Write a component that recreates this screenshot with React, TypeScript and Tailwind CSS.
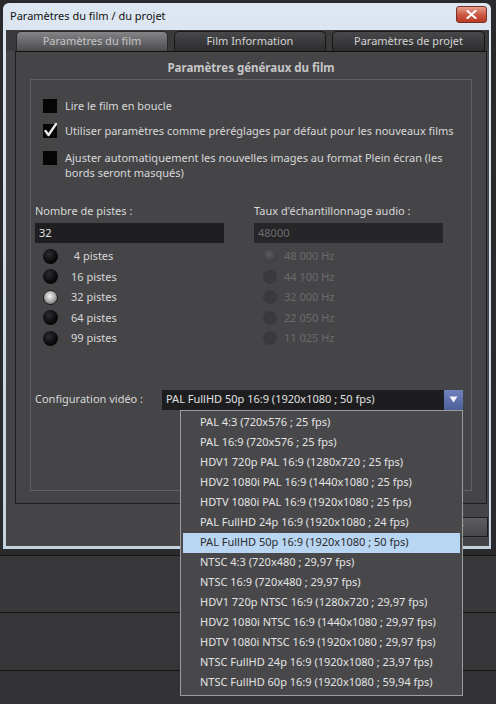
import React from "react";

const presets = [
  "PAL 4:3 (720x576 ; 25 fps)",
  "PAL 16:9 (720x576 ; 25 fps)",
  "HDV1 720p PAL 16:9 (1280x720 ; 25 fps)",
  "HDV2 1080i PAL 16:9 (1440x1080 ; 25 fps)",
  "HDTV 1080i PAL 16:9 (1920x1080 ; 25 fps)",
  "PAL FullHD 24p 16:9 (1920x1080 ; 24 fps)",
  "PAL FullHD 50p 16:9 (1920x1080 ; 50 fps)",
  "NTSC 4:3 (720x480 ; 29,97 fps)",
  "NTSC 16:9 (720x480 ; 29,97 fps)",
  "HDV1 720p NTSC 16:9 (1280x720 ; 29,97 fps)",
  "HDV2 1080i NTSC 16:9 (1440x1080 ; 29,97 fps)",
  "HDTV 1080i NTSC 16:9 (1920x1080 ; 29,97 fps)",
  "NTSC FullHD 24p 16:9 (1920x1080 ; 23,97 fps)",
  "NTSC FullHD 60p 16:9 (1920x1080 ; 59,94 fps)",
];

const tracks = [" 4 pistes", "16 pistes", "32 pistes", "64 pistes", "99 pistes"];
const rates = ["48 000 Hz", "44 100 Hz", "32 000 Hz", "22 050 Hz", "11 025 Hz"];

function CheckBox({ checked }: { checked?: boolean }) {
  return (
    <div className="relative mt-[1px] h-[14px] w-[14px] shrink-0 bg-[#050506]">
      {checked && (
        <svg className="absolute -top-[2px] left-0" width="15" height="16" viewBox="0 0 15 16">
          <path d="M2.5 9 L5.5 13 L13 2" fill="none" stroke="#e8e8e8" strokeWidth="2.4" strokeLinecap="round" strokeLinejoin="round" />
        </svg>
      )}
    </div>
  );
}

export default function App() {
  return (
    <div className="relative h-[704px] w-[496px] overflow-hidden font-['Noto_Sans',sans-serif] text-[11px]">
      {/* app behind the dialog */}
      <div className="flex h-full flex-col">
        <div className="h-[555px] bg-[#2a2a2c]" />
        <div className="h-[1px] bg-[#141415]" />
        <div className="h-[56px] bg-[#38383b]" />
        <div className="h-[1px] bg-[#141415]" />
        <div className="h-[57px] bg-[#363639]" />
        <div className="h-[1px] bg-[#141415]" />
        <div className="flex-1 bg-[#333336]" />
      </div>

      {/* dialog window */}
      <div className="absolute left-[3px] top-[3px] flex h-[546px] w-[488px] flex-col rounded-t-[6px] bg-gradient-to-b from-[#dde7f1] to-[#c3d2e1] pb-[3px] pl-[3px] pr-[2px]">
        {/* title bar */}
        <div className="flex h-[27px] shrink-0 items-center justify-between pl-[4px] pr-[2px]">
          <span className="text-[11px] text-[#111]">Paramètres du film / du projet</span>
          <div className="mt-[-4px] flex h-[17px] w-[31px] items-center justify-center rounded-[3px] border border-[#7a3024] bg-gradient-to-b from-[#e6a090] via-[#cc5a44] to-[#b83a26]">
            <svg width="11" height="9" viewBox="0 0 11 9">
              <path d="M1.5 1 L9.5 8 M9.5 1 L1.5 8" stroke="#fff" strokeWidth="2.2" strokeLinecap="round" />
            </svg>
          </div>
        </div>

        {/* body */}
        <div className="flex flex-1 flex-col bg-[#454548]">
          {/* tabs */}
          <div className="flex h-[21px] shrink-0 items-end gap-[6px] bg-[#3a3a3d] pl-[10px]">
            <div className="flex h-[20px] w-[152px] items-center justify-center rounded-t-[5px] border border-b-0 border-[#2a2a2c] bg-gradient-to-b from-[#858588] to-[#4c4c4f] text-[#c4c4c4]">
              Paramètres du film
            </div>
            <div className="flex h-[20px] w-[152px] items-center justify-center rounded-t-[5px] border border-b-0 border-[#161617] bg-gradient-to-b from-[#48484b] to-[#2c2c2e] text-[#d2d2d2]">
              Film Information
            </div>
            <div className="flex h-[20px] w-[153px] items-center justify-center rounded-t-[5px] border border-b-0 border-[#161617] bg-gradient-to-b from-[#48484b] to-[#2c2c2e] text-[#d2d2d2]">
              Paramètres de projet
            </div>
          </div>

          {/* tab panel */}
          <div className="ml-[9px] flex h-[453px] w-[472px] flex-col border border-[#1e1e20] border-t-[#111] bg-[#454548]">
            <div className="mt-[8px] text-center text-[11.5px] font-bold leading-[16px] text-[#c6c6c6]">
              Paramètres généraux du film
            </div>

            {/* group box */}
            <div className="mx-[14px] mt-[3px] flex h-[412px] flex-col border border-[#606063] text-[#d8d8d8]">
              <div className="flex flex-col pl-[12px]">
                <div className="mt-[18px] flex items-start gap-[8px] leading-[15px]">
                  <CheckBox />
                  <span>Lire le film en boucle</span>
                </div>
                <div className="mt-[10px] flex items-start gap-[8px] leading-[15px]">
                  <CheckBox checked />
                  <span className="whitespace-nowrap">Utiliser paramètres comme préréglages par défaut pour les nouveaux films</span>
                </div>
                <div className="mt-[12px] flex items-start gap-[8px] leading-[15px]">
                  <CheckBox />
                  <span className="whitespace-nowrap">
                    Ajuster automatiquement les nouvelles images au format Plein écran (les
                    <br />
                    bords seront masqués)
                  </span>
                </div>
              </div>

              <div className="mt-[23px] grid grid-cols-[189px_189px] gap-x-[30px] pl-[4px]">
                <div className="flex flex-col">
                  <span className="leading-[15px]">Nombre de pistes :</span>
                  <div className="mt-[5px] flex h-[20px] items-center bg-[#1f1f21] pl-[4px] text-[#e2e2e2]">32</div>
                  <div className="mt-[3px] flex flex-col">
                    {tracks.map((t, i) => (
                      <div key={t} className="flex h-[20.5px] items-center gap-[13px] pl-[8px]">
                        {i === 2 ? (
                          <div className="h-[15px] w-[15px] rounded-full border border-[#1a1a1a] bg-[radial-gradient(circle_at_45%_40%,#f4f4f4,#a8a8a8_50%,#4a4a4a)]" />
                        ) : (
                          <div className="h-[15px] w-[15px] rounded-full bg-[radial-gradient(circle_at_40%_35%,#2c2c31,#040405_70%)]" />
                        )}
                        <span className="whitespace-pre">{t}</span>
                      </div>
                    ))}
                  </div>
                </div>
                <div className="flex flex-col">
                  <span className="leading-[15px]">Taux d'échantillonnage audio :</span>
                  <div className="mt-[5px] flex h-[20px] items-center bg-[#262628] pl-[4px] text-[#6e6e70]">48000</div>
                  <div className="mt-[3px] flex flex-col text-[#6a6a6c]">
                    {rates.map((r, i) => (
                      <div key={r} className="flex h-[20.5px] items-center gap-[7px] pl-[9px]">
                        <div
                          className={
                            i === 0
                              ? "h-[14px] w-[14px] rounded-full bg-[radial-gradient(circle_at_45%_40%,#5c5c60,#3c3c3f_70%)]"
                              : "h-[14px] w-[14px] rounded-full bg-[#3a3a3d]"
                          }
                        />
                        <span>{r}</span>
                      </div>
                    ))}
                  </div>
                </div>
              </div>

              {/* video configuration */}
              <div className="mt-[41px] flex items-center pl-[4px]">
                <span className="w-[127px]">Configuration vidéo :</span>
                <div className="relative flex h-[20px] w-[301px] items-center bg-[#1d1d1f]">
                  <span className="flex-1 pl-[4px] text-[#e0e0e0]">PAL FullHD 50p 16:9 (1920x1080 ; 50 fps)</span>
                  <div className="flex h-[20px] w-[19px] items-center justify-center bg-gradient-to-b from-[#7083bd] to-[#4d5f98]">
                    <svg width="9" height="7" viewBox="0 0 9 7">
                      <path d="M0.5 0.5 L8.5 0.5 L4.5 6.5 Z" fill="#f4f4f8" />
                    </svg>
                  </div>

                  {/* open list */}
                  <div className="absolute left-[18px] top-full z-10 flex w-[283px] flex-col border border-[#9c9c9f] bg-[#48484b] px-[2px] pb-[2px] pt-[2px]">
                    {presets.map((p, i) => (
                      <div
                        key={p}
                        className={
                          i === 6
                            ? "flex h-[20px] items-center bg-[#b8d5f1] pl-[17px] text-[#2a2a2c]"
                            : "flex h-[20px] items-center pl-[17px] text-[#e4e4e4]"
                        }
                      >
                        {p}
                      </div>
                    ))}
                  </div>
                </div>
              </div>
            </div>
          </div>

          {/* buttons (hidden under the list) */}
          <div className="mt-[13px] flex justify-end gap-[8px] pr-[1px]">
            <div className="flex h-[20px] w-[90px] items-center justify-center border border-[#1c1c1e] bg-gradient-to-b from-[#5e5e61] to-[#48484b] text-[#ddd]">
              Annuler
            </div>
          </div>
        </div>
      </div>
    </div>
  );
}
